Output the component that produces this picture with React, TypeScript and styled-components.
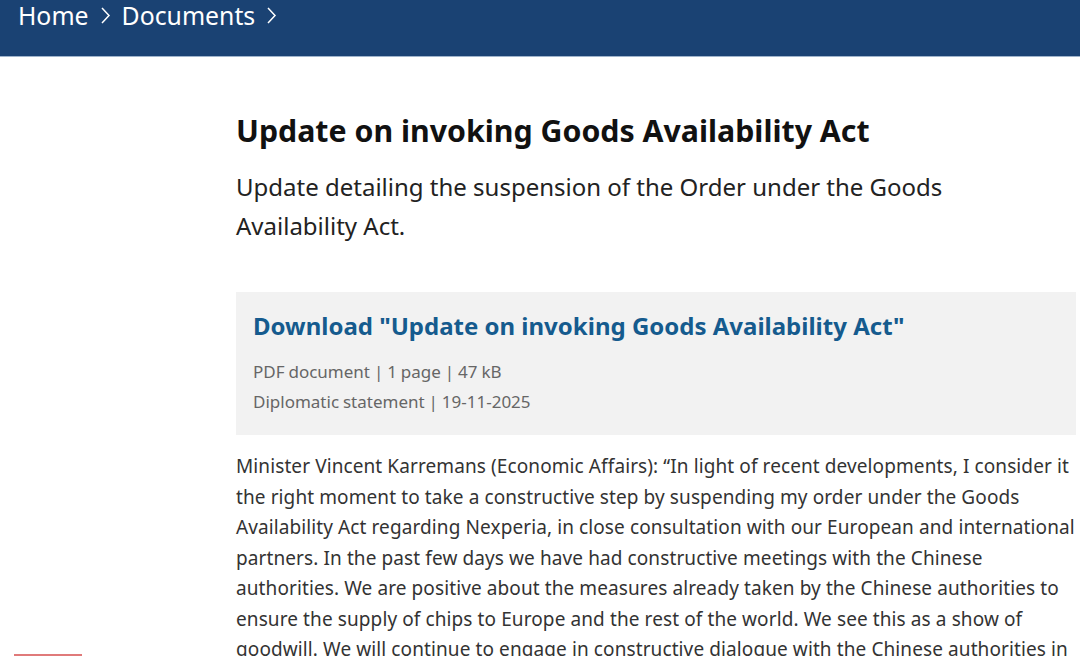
import * as React from 'react';
import styled, { createGlobalStyle } from 'styled-components';

const GlobalStyle = createGlobalStyle`
    html, body {
        margin: 0;
        padding: 0;
        background: #ffffff;
        font-family: 'Noto Sans', 'Open Sans', sans-serif;
        overflow: hidden;
    }
`;

const Page = styled.div`
    width: 1080px;
    height: 656px;
    overflow: hidden;
    position: relative;
`;

const Header = styled.header`
    height: 57px;
    background: #1a4273;
    border-bottom: 1px solid #9fb4cc;
    box-sizing: border-box;
    display: flex;
    align-items: flex-start;
    padding: 0 0 0 18px;
`;

const Crumbs = styled.nav`
    display: flex;
    align-items: center;
    gap: 11px;
    height: 30px;
`;

const Crumb = styled.a`
    color: #ffffff;
    font-size: 24.8px;
    line-height: 30px;
    text-decoration: none;
`;

const Chevron = () => (
    <svg width="11" height="19" viewBox="0 0 11 19" fill="none">
        <path d="M2 2 L9 9.5 L2 17" stroke="#ffffff" strokeWidth="1.5" />
    </svg>
);

const Main = styled.main`
    padding: 0 4px 0 236px;
`;

const Title = styled.h1`
    margin: 54px 0 0;
    font-size: 30.3px;
    line-height: 40px;
    font-weight: 700;
    color: #111111;
`;

const Lead = styled.p`
    margin: 16px 0 0;
    font-size: 24px;
    line-height: 39px;
    color: #222222;
    max-width: 740px;
`;

const DownloadBox = styled.section`
    margin-top: 47px;
    background: #f2f2f2;
    padding: 17px 17px 18px;
`;

const DownloadLink = styled.a`
    display: block;
    color: #155b8e;
    font-size: 24px;
    line-height: 34px;
    font-weight: 700;
    text-decoration: none;
`;

const Meta = styled.p<{ $first?: boolean }>`
    margin: ${(p) => (p.$first ? '14px' : '0')} 0 0;
    font-size: 17px;
    line-height: 30px;
    color: #666666;
    word-spacing: -0.5px;
`;

const Body = styled.p`
    margin: 16px 0 0;
    font-size: 19px;
    line-height: 30.5px;
    letter-spacing: 0.1px;
    color: #333333;
    white-space: nowrap;
`;

const RedTab = styled.div`
    position: absolute;
    left: 14px;
    bottom: 0;
    width: 68px;
    height: 2px;
    background: #e07a7a;
`;

const bodyLines = [
    'Minister Vincent Karremans (Economic Affairs): “In light of recent developments, I consider it',
    'the right moment to take a constructive step by suspending my order under the Goods',
    'Availability Act regarding Nexperia, in close consultation with our European and international',
    'partners. In the past few days we have had constructive meetings with the Chinese',
    'authorities. We are positive about the measures already taken by the Chinese authorities to',
    'ensure the supply of chips to Europe and the rest of the world. We see this as a show of',
    'goodwill. We will continue to engage in constructive dialogue with the Chinese authorities in',
    'the coming period.”',
];

export default function App(): JSX.Element {
    return (
        <Page>
            <GlobalStyle />
            <Header>
                <Crumbs>
                    <Crumb href="#">Home</Crumb>
                    <Chevron />
                    <Crumb href="#">Documents</Crumb>
                    <Chevron />
                </Crumbs>
            </Header>
            <Main>
                <Title>Update on invoking Goods Availability Act</Title>
                <Lead>
                    Update detailing the suspension of the Order under the Goods Availability Act.
                </Lead>
                <DownloadBox>
                    <DownloadLink href="#">
                        Download "Update on invoking Goods Availability Act"
                    </DownloadLink>
                    <Meta $first>PDF document | 1 page | 47 kB</Meta>
                    <Meta>Diplomatic statement | 19-11-2025</Meta>
                </DownloadBox>
                <Body>
                    {bodyLines.map((line, i) => (
                        <React.Fragment key={i}>
                            {line}
                            {i < bodyLines.length - 1 && <br />}
                        </React.Fragment>
                    ))}
                </Body>
            </Main>
            <RedTab />
        </Page>
    );
}
